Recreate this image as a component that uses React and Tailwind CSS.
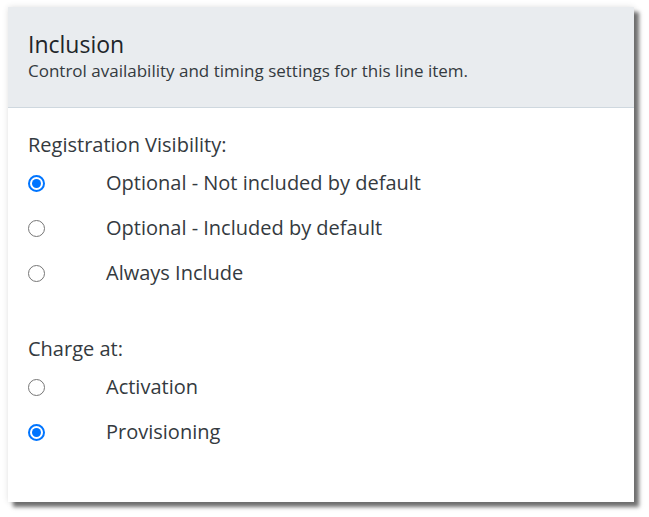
import React from "react";

function Radio({ checked }) {
  if (checked) {
    return (
      <div className="w-[17px] h-[17px] rounded-full border-2 border-[#0075ff] flex items-center justify-center bg-white">
        <div className="w-[9px] h-[9px] rounded-full bg-[#0075ff]" />
      </div>
    );
  }
  return <div className="w-[17px] h-[17px] rounded-full border-[1.5px] border-[#767676] bg-white" />;
}

function Row({ checked, label }) {
  return (
    <div className="h-[45px] flex items-center">
      <div className="w-[17px] ml-[20px] mt-[1px]">
        <Radio checked={checked} />
      </div>
      <span className="ml-[61px] text-[20px] text-[#343a40]">{label}</span>
    </div>
  );
}

export default function App() {
  return (
    <div
      className="w-[649px] h-[517px] bg-white pt-[7px] pl-[8px]"
      style={{ fontFamily: '"Segoe UI", "Open Sans", "Noto Sans", sans-serif' }}
    >
      <div className="w-[626px] h-[495px] bg-white shadow-[0_0_6px_rgba(0,0,0,0.12),5px_5px_4px_rgba(0,0,0,0.55)]">
        <div className="h-[101px] bg-[#e9ecef] border-b border-[#cfd8df] pl-[20px] pt-[22px]">
          <div className="text-[23px] leading-[30px] text-[#212529]">Inclusion</div>
          <div className="text-[17px] leading-[24px] text-[#343a40]">
            Control availability and timing settings for this line item.
          </div>
        </div>
        <div className="pt-[21px]">
          <div className="pl-[20px] h-[31px] leading-[31px] text-[20px] text-[#343a40]">
            Registration Visibility:
          </div>
          <Row checked label="Optional - Not included by default" />
          <Row label="Optional - Included by default" />
          <Row label="Always Include" />
          <div className="mt-[38px] pl-[20px] h-[31px] leading-[31px] text-[20px] text-[#343a40]">
            Charge at:
          </div>
          <Row label="Activation" />
          <Row checked label="Provisioning" />
        </div>
      </div>
    </div>
  );
}
